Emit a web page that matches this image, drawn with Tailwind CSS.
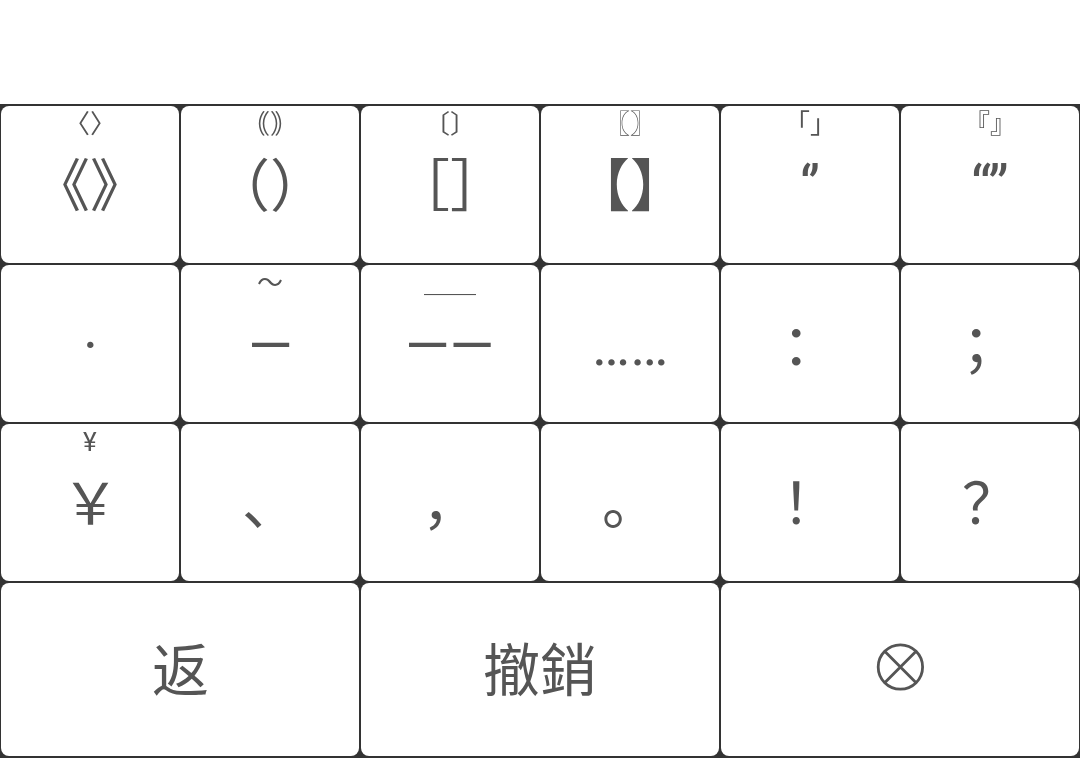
<!DOCTYPE html>
<html lang="zh">
<head>
<meta charset="utf-8">
<meta name="viewport" content="width=device-width, initial-scale=1">
<title>符號鍵盤</title>
<script src="https://cdn.jsdelivr.net/npm/@tailwindcss/browser@4"></script>
</head>
<body class="flex min-h-screen flex-col bg-white font-[Roboto,'Noto_Sans_CJK_SC',sans-serif] text-[#555555] antialiased">
<header class="h-26 shrink-0"></header>
<main class="grid flex-1 grid-cols-6 grid-rows-[1fr_1fr_1fr_173px] gap-0.5 bg-[#333333] px-px py-0.5">
<button class="flex flex-col items-center rounded-lg bg-white pt-[5px]"><span class="flex-1 basis-0 text-[26px] leading-[26px] will-change-transform">〈〉</span><span class="text-[57px] leading-[64px] will-change-transform">《》</span><span class="flex-1 basis-0"></span></button>
<button class="flex flex-col items-center rounded-lg bg-white pt-[5px]"><span class="flex-1 basis-0 text-[26px] leading-[26px] will-change-transform">｟｠</span><span class="text-[57px] leading-[64px] will-change-transform">（）</span><span class="flex-1 basis-0"></span></button>
<button class="flex flex-col items-center rounded-lg bg-white pt-[5px]"><span class="flex-1 basis-0 text-[26px] leading-[26px] will-change-transform">〔〕</span><span class="text-[57px] leading-[64px] will-change-transform">［］</span><span class="flex-1 basis-0"></span></button>
<button class="flex flex-col items-center rounded-lg bg-white pt-[5px]"><span class="flex-1 basis-0 text-[26px] leading-[26px] will-change-transform">〖〗</span><span class="text-[57px] leading-[64px] will-change-transform">【】</span><span class="flex-1 basis-0"></span></button>
<button class="flex flex-col items-center rounded-lg bg-white pt-[5px]"><span class="flex-1 basis-0 text-[26px] leading-[26px] will-change-transform">「」</span><span class="text-[57px] leading-[64px] will-change-transform">‘’</span><span class="flex-1 basis-0"></span></button>
<button class="flex flex-col items-center rounded-lg bg-white pt-[5px]"><span class="flex-1 basis-0 text-[26px] leading-[26px] will-change-transform">『』</span><span class="text-[57px] leading-[64px] will-change-transform">“”</span><span class="flex-1 basis-0"></span></button>

<button class="flex items-center justify-center rounded-lg bg-white pt-[5px]"><span class="text-[57px] leading-[64px] will-change-transform">·</span></button>
<button class="flex flex-col items-center rounded-lg bg-white pt-[5px]"><span class="flex-1 basis-0 text-[26px] leading-[26px] will-change-transform">～</span><span class="text-[57px] leading-[64px] will-change-transform">—</span><span class="flex-1 basis-0"></span></button>
<button class="flex flex-col items-center rounded-lg bg-white pt-[5px]"><span class="flex-1 basis-0 text-[26px] leading-[26px] will-change-transform">＿＿</span><span class="text-[57px] leading-[64px] will-change-transform">——</span><span class="flex-1 basis-0"></span></button>
<button class="flex items-center justify-center rounded-lg bg-white pt-[5px]"><span class="text-[57px] leading-[64px] will-change-transform">……</span></button>
<button class="flex items-center justify-center rounded-lg bg-white pt-[5px]"><span class="text-[57px] leading-[64px] will-change-transform">：</span></button>
<button class="flex items-center justify-center rounded-lg bg-white pt-[5px]"><span class="text-[57px] leading-[64px] will-change-transform">；</span></button>

<button class="flex flex-col items-center rounded-lg bg-white pt-[5px]"><span class="flex-1 basis-0 text-[26px] leading-[26px] will-change-transform">¥</span><span class="text-[57px] leading-[64px] will-change-transform">￥</span><span class="flex-1 basis-0"></span></button>
<button class="flex items-center justify-center rounded-lg bg-white pt-[5px]"><span class="text-[57px] leading-[64px] will-change-transform">、</span></button>
<button class="flex items-center justify-center rounded-lg bg-white pt-[5px]"><span class="text-[57px] leading-[64px] will-change-transform">，</span></button>
<button class="flex items-center justify-center rounded-lg bg-white pt-[5px]"><span class="text-[57px] leading-[64px] will-change-transform">。</span></button>
<button class="flex items-center justify-center rounded-lg bg-white pt-[5px]"><span class="text-[57px] leading-[64px] will-change-transform">！</span></button>
<button class="flex items-center justify-center rounded-lg bg-white pt-[5px]"><span class="text-[57px] leading-[64px] will-change-transform">？</span></button>

<button class="col-span-2 flex items-center justify-center rounded-lg bg-white pt-[5px]"><span class="text-[57px] leading-[64px] will-change-transform">返</span></button>
<button class="col-span-2 flex items-center justify-center rounded-lg bg-white pt-[5px]"><span class="text-[57px] leading-[64px] will-change-transform">撤銷</span></button>
<button class="col-span-2 flex items-center justify-center rounded-lg bg-white pb-[5px]" aria-label="清除"><svg class="size-12" viewBox="0 0 48 48" fill="none" stroke="currentColor" stroke-width="2.8"><circle cx="24.4" cy="24" r="22.2"/><path d="M8.7 8.3 40.1 39.7M40.1 8.3 8.7 39.7"/></svg></button>
</main>
</body>
</html>
